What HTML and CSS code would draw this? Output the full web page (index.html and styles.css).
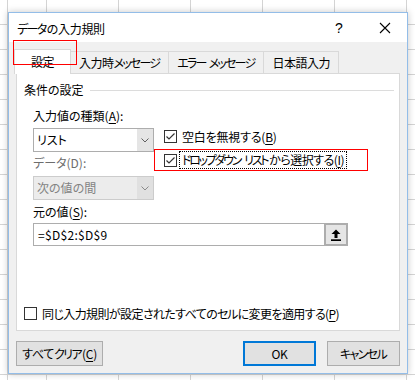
FILE: index.html
```html
<!DOCTYPE html>
<html lang="ja">
<head>
  <meta charset="UTF-8" />
  <title>データの入力規則</title>
  <link rel="stylesheet" href="styles.css">
</head>
<body>
<div class="dialog">
  <div class="titlebar">
    <span class="title"><span class="k">データ</span>の入力規則</span>
    <span class="help">?</span>
    <span class="close">
      <svg width="12" height="12" viewBox="0 0 12 12"><path d="M1 1L11 11M11 1L1 11" stroke="#000" stroke-width="1.1" fill="none"/></svg>
    </span>
  </div>
  <div class="content">
    <div class="tabs">
      <div class="tab active">設定</div>
      <div class="tab">入力時<span class="k">メッセージ</span></div>
      <div class="tab"><span class="k">エラー</span> <span class="k">メッセージ</span></div>
      <div class="tab">日本語入力</div>
      <span class="mark mark-tab"></span>
    </div>
    <div class="panel">
      <div class="group-title"><span>条件の設定</span></div>
      <div class="criteria">
        <div class="col">
          <div class="label">入力値の種類(<u>A</u>):</div>
          <div class="select">
            <span class="select-text">リスト</span>
            <span class="drop"><svg width="8" height="5" viewBox="0 0 8 5"><path d="M0.5 0.5L4 4L7.5 0.5" stroke="#606060" fill="none"/></svg></span>
          </div>
          <div class="label off">データ(D):</div>
          <div class="select disabled">
            <span class="select-text">次の値の間</span>
            <span class="drop"><svg width="8" height="5" viewBox="0 0 8 5"><path d="M0.5 0.5L4 4L7.5 0.5" stroke="#8a8a8a" fill="none"/></svg></span>
          </div>
        </div>
        <div class="checks">
          <div class="check">
            <span class="box"><svg width="11" height="11" viewBox="0 0 11 11"><path d="M1.5 5.5L4 8L9.5 2.5" stroke="#333" stroke-width="1.2" fill="none"/></svg></span>
            <span class="check-text">空白を無視する(<u>B</u>)</span>
          </div>
          <div class="check">
            <span class="box"><svg width="11" height="11" viewBox="0 0 11 11"><path d="M1.5 5.5L4 8L9.5 2.5" stroke="#333" stroke-width="1.2" fill="none"/></svg></span>
            <span class="check-text focus"><span class="k">ドロップダウン</span> <span class="k">リスト</span>から選択する(<u>I</u>)</span>
            <span class="mark mark-check"></span>
          </div>
        </div>
      </div>
      <div class="label">元の値(<u>S</u>):</div>
      <div class="source">
        <span class="source-text">=$D$2:$D$9</span>
        <span class="ref-btn">
          <svg width="10" height="12" viewBox="0 0 10 12"><path d="M5 0.5L9.5 5H6.5V9H3.5V5H0.5Z" fill="#000"/><rect x="0" y="10.3" width="10" height="1.7" fill="#000"/></svg>
        </span>
      </div>
      <div class="check apply">
        <span class="box"></span>
        <span class="check-text">同じ入力規則が設定されたすべての<span class="k">セル</span>に変更を適用する(<u>P</u>)</span>
      </div>
    </div>
    <div class="buttons">
      <button class="btn">すべて<span class="k">クリア</span>(<u>C</u>)</button>
      <span class="spacer"></span>
      <button class="btn primary">OK</button>
      <button class="btn"><span class="k">キャンセル</span></button>
    </div>
  </div>
</div>
</body>
</html>
```

FILE: styles.css
```css
html, body {
  margin: 0;
  padding: 0;
}
body {
  width: 415px;
  height: 380px;
  overflow: hidden;
  font-family: "Noto Sans CJK JP", "Noto Sans", sans-serif;
  font-size: 12px;
  font-feature-settings: "palt";
  color: #000;
  background-color: #fff;
  background-image:
    linear-gradient(to right, transparent 7px, #d4d4d4 7px, #d4d4d4 8px, transparent 8px),
    linear-gradient(to right, #d4d4d4 1px, transparent 1px),
    linear-gradient(to bottom, transparent 24px, #d4d4d4 24px);
  background-size: 100% 100%, 72px 100%, 100% 25px;
  background-position: 0 0, 46px 0, 0 0;
  background-repeat: no-repeat, repeat, repeat;
  padding: 12px 0 0 8px;
  box-sizing: border-box;
}
u {
  text-decoration-thickness: 1px;
  text-underline-offset: 2px;
}
/* narrower katakana, like the UI font */
.k {
  letter-spacing: -1.6px;
  margin-right: 1px;
}
.dialog {
  width: 400px;
  height: 362px;
  box-sizing: border-box;
  border: 1px solid #93bde8;
  background: #f0f0f0;
  box-shadow: 0 0 7px rgba(0,0,0,0.22);
}
.titlebar {
  height: 29px;
  background: #fff;
  display: flex;
  align-items: center;
  padding-left: 8px;
}
.title {
  flex: 1;
  padding-top: 1px;
  letter-spacing: -0.3px;
}
.help {
  font-size: 14px;
  width: 20px;
  text-align: center;
  margin-right: 30px;
  font-family: "Liberation Sans", sans-serif;
}
.close {
  width: 12px;
  height: 12px;
  margin-right: 16px;
  display: flex;
}
.content {
  padding: 0 7px;
}
.tabs {
  position: relative;
  display: flex;
  align-items: flex-end;
  height: 31px;
  margin-left: -2px;
}
.tab {
  height: 22px;
  line-height: 21px;
  padding: 0 8px;
  border: 1px solid #d9d9d9;
  border-bottom: none;
  margin-left: -1px;
  background: #f0f0f0;
  box-sizing: border-box;
  white-space: nowrap;
  letter-spacing: -0.5px;
}
.tab .k {
  letter-spacing: -1.8px;
}
.tab.active {
  height: 25px;
  line-height: 24px;
  margin-left: 0;
  margin-bottom: -1px;
  padding: 0 16px;
  background: #fff;
  position: relative;
  z-index: 1;
}
.mark {
  position: absolute;
  border: 1px solid #f00;
  box-sizing: border-box;
  z-index: 2;
}
.mark-tab {
  left: -1px;
  top: -2px;
  width: 64px;
  height: 25px;
}
.panel {
  background: #fff;
  border: 1px solid #d9d9d9;
  height: 258px;
  box-sizing: border-box;
  padding: 8px 0 0 0;
}
.group-title {
  display: flex;
  align-items: center;
  line-height: 16px;
  padding-left: 7px;
  margin-right: 5px;
}
.group-title::after {
  content: "";
  flex: 1;
  height: 1px;
  background: #dcdcdc;
  margin-left: 6px;
  margin-top: 1px;
}
.criteria {
  display: flex;
  gap: 10px;
  margin-top: 10px;
  padding-left: 16px;
}
.col {
  width: 121px;
}
.label {
  line-height: 16px;
}
.panel > .label {
  margin: 4px 0 0 16px;
}
.label.off {
  color: #6d6d6d;
  margin-top: 3px;
}
.select {
  height: 24px;
  margin-top: 4px;
  border: 1px solid #adadad;
  box-sizing: border-box;
  display: flex;
  background: #fff;
}
.select.disabled {
  margin-top: 5px;
  background: #ececec;
  border-color: #cccccc;
  color: #838383;
}
.select-text {
  flex: 1;
  padding-left: 3px;
  line-height: 22px;
}
.drop {
  width: 16px;
  background: #e5e5e5;
  display: flex;
  align-items: center;
  justify-content: center;
}
.select.disabled .drop {
  background: #e0e0e0;
}
.checks {
  padding-top: 17px;
  display: flex;
  flex-direction: column;
  gap: 2px;
}
.check {
  position: relative;
  display: flex;
  align-items: center;
  height: 22px;
  white-space: nowrap;
}
.box {
  width: 13px;
  height: 13px;
  border: 1px solid #333;
  box-sizing: border-box;
  background: #fff;
  display: flex;
  align-items: center;
  justify-content: center;
}
.check-text {
  margin-left: 5px;
  letter-spacing: -0.2px;
}
.check-text.focus {
  margin-left: 2px;
  padding: 0 2px;
  line-height: 16px;
  border: 1px dotted #000;
  letter-spacing: -0.5px;
}
.check-text.focus .k {
  letter-spacing: -2.3px;
  margin-right: 2px;
}
.mark-check {
  left: -10px;
  top: 0;
  width: 214px;
  height: 22px;
}
.source {
  margin: 3px 0 0 16px;
  width: 315px;
  height: 23px;
  border: 1px solid #adadad;
  box-sizing: border-box;
  display: flex;
}
.source-text {
  flex: 1;
  padding-left: 4px;
  line-height: 21px;
  letter-spacing: 0.3px;
}
.ref-btn {
  width: 20px;
  margin: -1px -1px -1px 0;
  border: 2px solid #adadad;
  background: #e5e5e5;
  display: flex;
  align-items: center;
  justify-content: center;
}
.apply {
  margin: 56px 0 0 7px;
}
.apply .check-text {
  letter-spacing: -0.6px;
}
.buttons {
  display: flex;
  gap: 11px;
  margin-top: 10px;
}
.spacer {
  flex: 1;
}
.btn {
  font: inherit;
  font-feature-settings: "palt";
  letter-spacing: -0.3px;
  color: #000;
  background: #e1e1e1;
  border: 1px solid #adadad;
  height: 25px;
  padding: 0;
  width: 73px;
}
.btn:first-child {
  width: 87px;
}
.btn.primary {
  border: 2px solid #0078d7;
}
```
